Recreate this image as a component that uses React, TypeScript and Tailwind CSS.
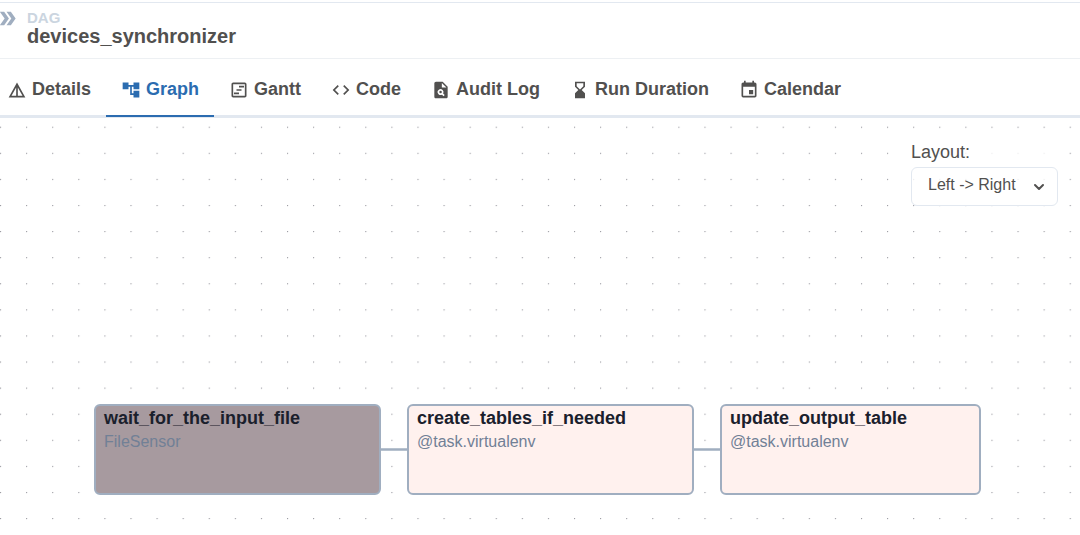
import { useState } from "react";
import type { IconType } from "react-icons";
import {
  MdAccountTree,
  MdCode,
  MdDetails,
  MdDoubleArrow,
  MdEvent,
  MdHourglassBottom,
  MdOutlineViewTimeline,
  MdPlagiarism,
} from "react-icons/md";
import { FiChevronDown } from "react-icons/fi";

const tabs: { label: string; Icon: IconType }[] = [
  { label: "Details", Icon: MdDetails },
  { label: "Graph", Icon: MdAccountTree },
  { label: "Gantt", Icon: MdOutlineViewTimeline },
  { label: "Code", Icon: MdCode },
  { label: "Audit Log", Icon: MdPlagiarism },
  { label: "Run Duration", Icon: MdHourglassBottom },
  { label: "Calendar", Icon: MdEvent },
];

const nodes = [
  { id: "wait_for_the_input_file", operator: "FileSensor", box: "left-[94px] w-[287px] bg-[#a79a9f]" },
  { id: "create_tables_if_needed", operator: "@task.virtualenv", box: "left-[407px] w-[287px] bg-[#fff1ee]" },
  { id: "update_output_table", operator: "@task.virtualenv", box: "left-[720px] w-[261px] bg-[#fff1ee]" },
];

function Header() {
  return (
    <header className="mt-0.5 flex h-[57px] items-start border-t border-b border-t-[#e2e8f0] border-b-[#edf0f3]">
      <button type="button" aria-label="Collapse panel" className="mt-1 -ml-1 text-[#a0aec0]">
        <MdDoubleArrow size={23} aria-hidden="true" />
      </button>
      <div className="ml-2 pt-[7px]">
        <p className="text-[15px] leading-4 font-bold text-[#cbd5e0]">DAG</p>
        <h1 className="text-[20px] leading-5 font-bold">devices_synchronizer</h1>
      </div>
    </header>
  );
}

function Tabs({ active, onSelect }: { active: string; onSelect: (label: string) => void }) {
  return (
    <nav role="tablist" className="flex h-[59px] border-b-[3px] border-[#e2e8f0]">
      <div className="-mb-[3px] -ml-2 flex">
        {tabs.map(({ label, Icon }) => (
          <button
            key={label}
            type="button"
            role="tab"
            aria-selected={active === label}
            onClick={() => onSelect(label)}
            className={`mb-px flex items-center gap-[5px] border-b-2 px-[15px] pt-1 text-[18px] leading-6 font-bold whitespace-nowrap ${
              active === label ? "border-[#2b6cb0] text-[#2b6cb0]" : "border-transparent"
            }`}
          >
            <Icon size={20} aria-hidden="true" className="mt-0.5" />
            <span>{label}</span>
          </button>
        ))}
      </div>
    </nav>
  );
}

function Canvas() {
  return (
    <main className="relative flex-1 overflow-hidden">
      <svg className="absolute inset-0 h-full w-full" aria-hidden="true">
        <defs>
          <pattern id="dots" width="26.09" height="26.09" x="0" y="8.7" patternUnits="userSpaceOnUse">
            <circle cx="0.6" cy="0.6" r="0.6" fill="#81818a" />
          </pattern>
        </defs>
        <rect width="100%" height="100%" fill="url(#dots)" />
        <path d="M380 331.500H408M693 331.500H721" stroke="#a0aec0" strokeWidth="2.500" />
      </svg>
      {nodes.map((node) => (
        <article
          key={node.id}
          className={`absolute top-[286px] h-[91px] rounded-md border-2 border-[#a0aec0] px-2 ${node.box}`}
        >
          <h2 className="text-[18px] leading-6 font-bold text-[#1a202c]">{node.id}</h2>
          <p className="text-[16px] leading-6 text-[#718096]">{node.operator}</p>
        </article>
      ))}
      <div className="absolute top-[22px] right-[22px] w-[147px]">
        <label htmlFor="layout" className="block bg-white/80 pb-0.5 text-[18px] leading-[25px]">
          Layout:
        </label>
        <div className="relative">
          <select
            id="layout"
            defaultValue="LR"
            className="h-[39px] w-full appearance-none rounded-md border border-[#e2e8f0] bg-white/80 px-4 pb-1 text-[16px]"
          >
            <option value="LR">Left -&gt; Right</option>
            <option value="RL">Right -&gt; Left</option>
            <option value="TB">Top -&gt; Bottom</option>
            <option value="BT">Bottom -&gt; Top</option>
          </select>
          <FiChevronDown
            size={16}
            strokeWidth={3}
            aria-hidden="true"
            className="pointer-events-none absolute top-3 right-[11px]"
          />
        </div>
      </div>
    </main>
  );
}

export default function App() {
  const [active, setActive] = useState("Graph");
  return (
    <div className="flex min-h-screen flex-col overflow-hidden bg-white font-['Liberation_Sans',Arial,sans-serif] text-[#51504f]">
      <Header />
      <Tabs active={active} onSelect={setActive} />
      <Canvas />
    </div>
  );
}
